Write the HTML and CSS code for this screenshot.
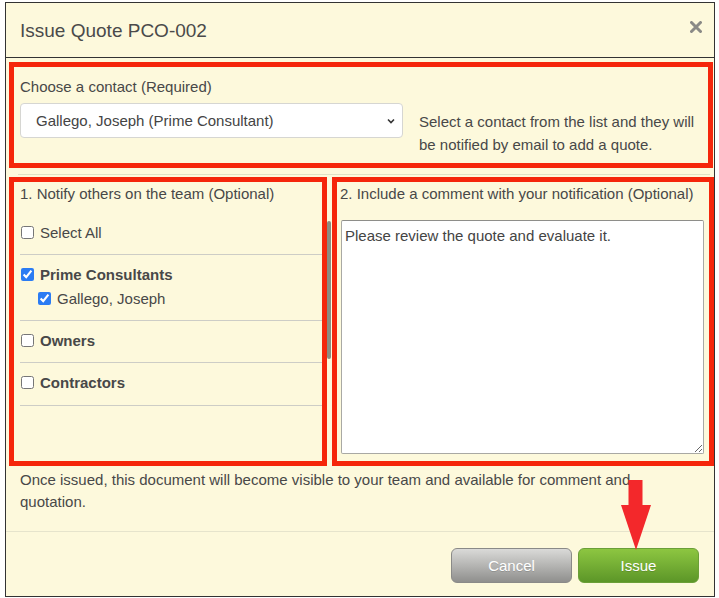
FILE: index.html
```html
<!DOCTYPE html>
<html lang="en">
<head>
  <meta charset="UTF-8">
  <meta name="viewport" content="width=device-width, initial-scale=1.0">
  <title>Issue Quote PCO-002</title>
  <link rel="stylesheet" href="styles.css">
</head>
<body>
  <div class="modal">
    <div class="modal-header">
      <h3 class="modal-title">Issue Quote PCO-002</h3>
      <button class="close-btn" aria-label="Close">
        <svg width="12" height="12" viewBox="0 0 12 12"><path d="M1.5 1.5 L10.5 10.5 M10.5 1.5 L1.5 10.5" stroke="#8a8a86" stroke-width="3" stroke-linecap="round"/></svg>
      </button>
    </div>

    <div class="modal-body">
      <div class="contact-box marked">
        <div class="field-label">Choose a contact (Required)</div>
        <div class="contact-row">
          <div class="select-box">
            <span>Gallego, Joseph (Prime Consultant)</span>
            <svg width="8" height="6" viewBox="0 0 8 6"><path d="M1 1.5 L4 4.5 L7 1.5" fill="none" stroke="#333" stroke-width="1.6"/></svg>
          </div>
          <p class="help-text">Select a contact from the list and they will be notified by email to add a quote.</p>
        </div>
      </div>

      <div class="divider"></div>

      <div class="team-row">
        <div class="notify-box marked">
          <div class="field-label">1. Notify others on the team (Optional)</div>
          <ul class="team-list">
            <li class="team-item">
              <label class="check"><input type="checkbox"> Select All</label>
            </li>
            <li class="team-item">
              <label class="check group"><input type="checkbox" checked> Prime Consultants</label>
              <label class="check sub"><input type="checkbox" checked> Gallego, Joseph</label>
            </li>
            <li class="team-item">
              <label class="check group"><input type="checkbox"> Owners</label>
            </li>
            <li class="team-item">
              <label class="check group"><input type="checkbox"> Contractors</label>
            </li>
          </ul>
        </div>
        <div class="scroll-track"><div class="scroll-thumb"></div></div>
        <div class="comment-box marked">
          <div class="field-label">2. Include a comment with your notification (Optional)</div>
          <textarea class="comment">Please review the quote and evaluate it.</textarea>
        </div>
      </div>

      <p class="notice">Once issued, this document will become visible to your team and available for comment and quotation.</p>
    </div>

    <div class="modal-footer">
      <button class="btn btn-cancel">Cancel</button>
      <button class="btn btn-issue">Issue</button>
    </div>

    <svg class="arrow" width="32" height="72" viewBox="0 0 32 72">
      <rect x="7.5" y="0" width="14" height="27" fill="#f3282b"/>
      <polygon points="0,25 30,25 15,70" fill="#f3282b"/>
    </svg>
  </div>
</body>
</html>
```

FILE: styles.css
```css
* {
  margin: 0;
  padding: 0;
  box-sizing: border-box;
}

body {
  background: #fff;
  font-family: 'Liberation Sans', Arial, Helvetica, sans-serif;
  font-size: 15px;
  color: #484848;
}

.modal {
  position: relative;
  width: 710px;
  height: 595px;
  margin: 2px 0 0 5px;
  background: #fdf9dc;
  border: 1px solid #333;
}

.modal-header {
  height: 55px;
  padding: 2px 12px 0 14px;
  display: flex;
  justify-content: space-between;
  align-items: center;
  border-bottom: 1px solid #333;
}

.modal-title {
  font-size: 19px;
  font-weight: normal;
  color: #4a4a4a;
}

.close-btn {
  background: none;
  border: none;
  display: flex;
  margin-bottom: 9px;
  cursor: pointer;
}

.modal-body {
  padding: 4px 1px 0 3px;
}

/* red annotation frames */
.marked {
  border: 5px solid #f5260b;
}

.field-label {
  line-height: 20px;
}

.contact-box {
  height: 106px;
  padding: 10px 6px 0 6px;
}

.contact-box .field-label {
  margin-bottom: 6px;
}

.contact-row {
  display: flex;
  align-items: flex-start;
  gap: 16px;
}

.select-box {
  flex: 0 0 383px;
  height: 35px;
  padding: 0 7px 0 15px;
  display: flex;
  align-items: center;
  justify-content: space-between;
  background: #fff;
  border: 1px solid #d6d6d2;
  border-radius: 4px;
  color: #444;
}

.help-text {
  margin-top: 7px;
  line-height: 23px;
}

.divider {
  height: 1px;
  margin: 6px 3px 0 9px;
  background: #dfe2c6;
}

.team-row {
  display: flex;
  height: 289px;
  margin-top: 2px;
}

.notify-box {
  flex: 0 0 318px;
  padding: 2px 0 0 6px;
}

.team-list {
  list-style: none;
  margin-top: 9px;
}

.team-item {
  padding: 9px 0 11px;
  border-bottom: 1px solid #cdcdc6;
}

.team-item:last-child {
  padding-bottom: 12px;
}

.check {
  display: flex;
  align-items: center;
  gap: 6px;
  line-height: 21px;
}

.check input {
  width: 13px;
  height: 13px;
  margin: 0 0 0 1px;
  accent-color: #2b7cf3;
}

.check.group {
  font-weight: bold;
}

.check.sub {
  margin-top: 3px;
  padding-left: 17px;
}

.scroll-track {
  flex: 0 0 5px;
}

.scroll-thumb {
  width: 4px;
  height: 138px;
  margin-top: 44px;
  background: #8b8b80;
  border-radius: 2px;
}

.comment-box {
  flex: 1;
  padding: 2px 5px 0 3px;
}

.comment {
  display: block;
  width: 363px;
  height: 234px;
  margin: 16px 0 0 1px;
  padding: 6px 3px;
  font-family: inherit;
  font-size: 15px;
  color: #444;
  background: #fff;
  border: 1px solid #a9a9a4;
  border-top-color: #8e8e8a;
  border-radius: 2px;
}

.notice {
  margin-top: 3px;
  padding: 0 30px 0 11px;
  line-height: 22px;
}

.modal-footer {
  position: absolute;
  left: 0;
  right: 0;
  bottom: 0;
  height: 65px;
  padding: 16px 15px 0 0;
  display: flex;
  justify-content: flex-end;
  gap: 6px;
  border-top: 1px solid #e6e4cc;
}

.btn {
  width: 121px;
  height: 35px;
  font-family: inherit;
  font-size: 15px;
  color: #fff;
  border-radius: 6px;
  cursor: pointer;
  text-shadow: 0 1px 0 rgba(0, 0, 0, 0.15);
}

.btn-cancel {
  background: linear-gradient(#dadad8, #8f8f8d);
  border: 1px solid #8a8a88;
}

.btn-issue {
  background: linear-gradient(#8dc641, #5c9628);
  border: 1px solid #6b9f38;
}

.arrow {
  position: absolute;
  left: 615px;
  top: 477px;
}
```
